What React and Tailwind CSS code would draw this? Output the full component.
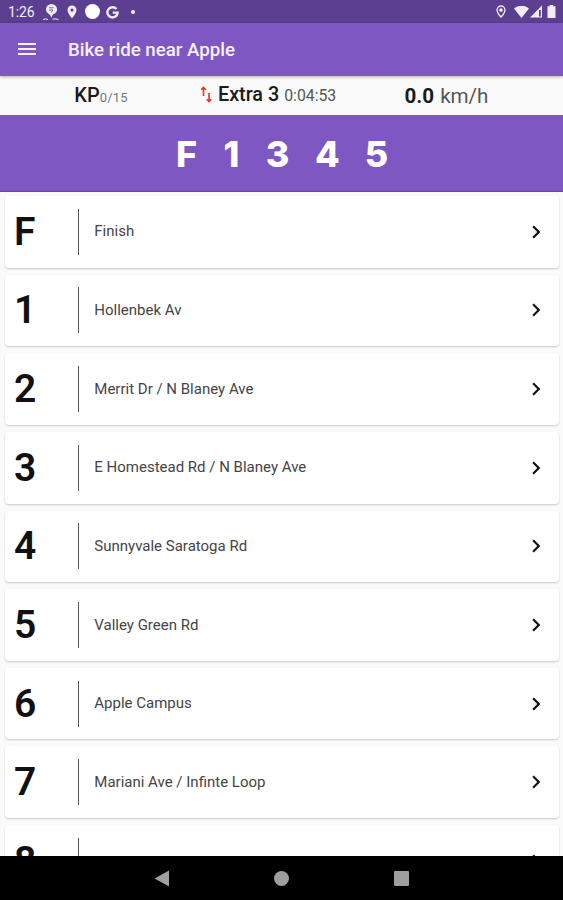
import { MdChevronRight, MdMenu } from 'react-icons/md'

const checkpoints = [
  { id: 'F', name: 'Finish' },
  { id: '1', name: 'Hollenbek Av' },
  { id: '2', name: 'Merrit Dr / N Blaney Ave' },
  { id: '3', name: 'E Homestead Rd / N Blaney Ave' },
  { id: '4', name: 'Sunnyvale Saratoga Rd' },
  { id: '5', name: 'Valley Green Rd' },
  { id: '6', name: 'Apple Campus' },
  { id: '7', name: 'Mariani Ave / Infinte Loop' },
  { id: '8', name: '' },
]

function StatusBar() {
  return (
    <div className="h-[23px] shrink-0 bg-[#5c3f91] flex items-center text-[#f1edf7]">
      <span className="ml-2 w-[35px] text-[14px] leading-none tracking-[-0.1px]">1:26</span>
      <svg className="w-4 h-[18px]" viewBox="0 0 16 18" fill="currentColor">
        <path d="M8.500 1a5.600 5.600 0 0 0-5.600 5.500c0 2.600 2 4 4 5.200l1.400 2.800 1.500-2.900c2.500-1 4.300-2.600 4.300-5.100A5.600 5.600 0 0 0 8.500 1z" />
        <path d="M6 4.800h4.500M6 7h4l-2 2.500" stroke="#5c3f91" strokeWidth="0.800" fill="none" />
        <path d="M0 16.500l2.500-.6 2.500.6M9.500 16.300l2.500-.5 3.500.7" stroke="currentColor" strokeWidth="1" fill="none" />
      </svg>
      <svg className="ml-2 w-[10px] h-[14px]" viewBox="0 0 10 14" fill="currentColor">
        <path fillRule="evenodd" d="M5 .5A4.500 4.500 0 0 0 .5 5C.5 8.300 5 13.300 5 13.300S9.500 8.300 9.500 5A4.500 4.500 0 0 0 5 .5zm0 3a1.600 1.600 0 1 1 0 3.200 1.600 1.600 0 0 1 0-3.200z" />
      </svg>
      <span className="ml-[8px] size-[15px] rounded-full bg-white" />
      <svg className="ml-[6px] mt-px size-[13px]" viewBox="0 0 13 13" fill="none" stroke="currentColor" strokeWidth="2.400">
        <path d="M10.400 3A5.100 5.100 0 1 0 11.600 6.600H6.700" />
      </svg>
      <span className="ml-[12px] size-[4px] rounded-full bg-[#f1edf7]" />
      <div className="ml-auto mr-[7px] flex items-center">
        <svg className="w-[10px] h-[13px]" viewBox="0 0 10 13" fill="none" stroke="currentColor" strokeWidth="1.300">
          <path d="M5 1a3.900 3.900 0 0 0-3.900 3.900C1.100 7.800 5 12 5 12s3.900-4.200 3.900-7.100A3.900 3.900 0 0 0 5 1z" />
          <circle cx="5" cy="5" r="1.200" fill="currentColor" />
        </svg>
        <svg className="ml-2 w-[15px] h-[12px]" viewBox="0 0 15 12" fill="currentColor">
          <path d="M0 2.500a11.500 11.500 0 0 1 15 0L7.500 12z" />
        </svg>
        <svg className="ml-px w-[12px] h-[13px]" viewBox="0 0 12 13" fill="currentColor">
          <path fillRule="evenodd" d="M12 .5V12.500H0zM9 5v6.500h1.800V5z" />
        </svg>
        <svg className="ml-[5px] w-[9px] h-[13px]" viewBox="0 0 9 13" fill="currentColor">
          <path d="M2.700 0h3.600v1.300H8.500V13H.5V1.300h2.200z" />
        </svg>
      </div>
    </div>
  )
}

function AppBar() {
  return (
    <header className="relative z-10 h-[53px] shrink-0 bg-[#7e57c2] shadow-[0_1px_3px_rgba(0,0,0,0.3)] flex items-center text-[#f5f0fb]">
      <MdMenu className="ml-[15px] -mt-px size-6" />
      <h1 className="ml-[29px] pt-0.5 text-[18.700px] font-medium leading-none">Bike ride near Apple</h1>
    </header>
  )
}

function Stats() {
  return (
    <div className="h-[39px] shrink-0 bg-[#fafafa] grid grid-cols-[202px_131px_1fr] items-center pb-[2px] text-[#1b1b1b] whitespace-nowrap leading-none">
      <div className="flex items-baseline justify-center">
        <span className="text-[20px] font-medium">KP</span>
        <span className="text-[13px] text-[#777] tracking-[0.2px]">0/15</span>
      </div>
      <div className="flex items-center -ml-[3px]">
        <svg className="w-[14px] h-[18px] shrink-0" viewBox="0 0 14 18" fill="none" stroke="#ee3124" strokeWidth="1.600">
          <path d="M4.500 11V2.500M2.200 4.800L4.500 2.500l2.300 2.300M10 8V16.500M7.700 14.200L10 16.500l2.300-2.300" />
        </svg>
        <div className="ml-[5px] flex items-baseline">
          <span className="text-[19.800px] font-medium">Extra 3</span>
          <span className="ml-[5px] text-[15.800px] text-[#555]">0:04:53</span>
        </div>
      </div>
      <div className="flex items-baseline justify-center pt-[3px] pr-[3px] text-[20.600px]">
        <span className="font-bold">0.0</span>
        <span className="ml-[6px] text-[#555]">km/h</span>
      </div>
    </div>
  )
}

function Route() {
  return (
    <div className="h-[77px] shrink-0 bg-[#7e57c2] border-b border-[#6f3fb9] grid grid-cols-[46px_44px_48px_52px_46px] justify-center items-center pt-0.5 text-center font-[Inter,sans-serif] text-[36px] font-extrabold text-white leading-none">
      {['F', '1', '3', '4', '5'].map((stop) => (
        <span key={stop}>{stop}</span>
      ))}
    </div>
  )
}

function CheckpointRow({ id, name }) {
  return (
    <li className="h-[71.650px] shrink-0 bg-white rounded-[4px] shadow-[0_1px_2px_rgba(0,0,0,0.2)] flex items-center">
      <span className="w-[73px] pl-[9px] pt-[1px] text-[39px] font-semibold leading-none text-[#111]">{id}</span>
      <span className="w-[1.300px] h-[46px] bg-[#555]" />
      <span className="ml-[15px] text-[15px] leading-none text-[#454545]">{name}</span>
      <MdChevronRight className="ml-auto mr-[10px] size-[26px] text-[#111]" />
    </li>
  )
}

function NavBar() {
  return (
    <nav className="h-[44px] shrink-0 bg-black flex items-center text-[#9e9e9e]">
      <svg className="ml-[154px] w-[15px] h-[17px]" viewBox="0 0 15 17" fill="currentColor">
        <path d="M15 .5v16L.5 8.500z" />
      </svg>
      <span className="ml-[105px] size-[15px] rounded-full bg-[#9e9e9e]" />
      <span className="ml-[105px] size-[15px] rounded-[1px] bg-[#9e9e9e]" />
    </nav>
  )
}

export default function App() {
  return (
    <div className="w-[563px] h-[900px] overflow-hidden flex flex-col bg-[#fafafa] font-[Roboto,sans-serif]">
      <StatusBar />
      <AppBar />
      <Stats />
      <Route />
      <ul className="flex-1 min-h-0 overflow-hidden flex flex-col gap-[7px] pt-1 pl-[5px] pr-1">
        {checkpoints.map((point) => (
          <CheckpointRow key={point.id} {...point} />
        ))}
      </ul>
      <NavBar />
    </div>
  )
}
